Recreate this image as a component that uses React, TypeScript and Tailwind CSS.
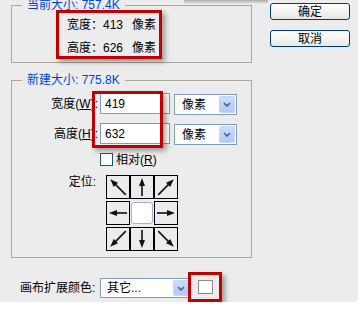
import React from 'react';

// small dark arrow used in the anchor grid; drawn pointing up, then rotated
function Arrow({ deg, long = false }: { deg: number; long?: boolean }) {
  const top = long ? 0 : 2;
  const tail = long ? 22 : 20;
  return (
    <svg viewBox="0 0 22 22" className="w-[22px] h-[22px]">
      <g transform={`rotate(${deg} 11 11)`}>
        <line x1="11" y1={tail} x2="11" y2={top + 6} stroke="#1a1a1a" strokeWidth="1.7" />
        <polygon points={`11,${top} 8,${top + 8} 14,${top + 8}`} fill="#111" />
      </g>
    </svg>
  );
}

function Cell({ children }: { children: React.ReactNode }) {
  return (
    <div className="w-[24px] h-[24px] border border-black bg-[#ececec] flex items-center justify-center">
      {children}
    </div>
  );
}

function DropButton() {
  return (
    <div className="w-[16px] h-full rounded-[2px] border border-[#c6d4f5] bg-linear-to-b from-[#cddbfd] to-[#b3c9f7] flex items-center justify-center">
      <svg viewBox="0 0 8 5" className="w-[8px] h-[5px]">
        <path d="M1 1 L4 4 L7 1" fill="none" stroke="#4d6185" strokeWidth="1.7" />
      </svg>
    </div>
  );
}

function RedBox({ className }: { className: string }) {
  return (
    <div
      className={`absolute border-[3px] border-[#c00000] shadow-[3px_3px_5px_rgba(0,0,0,0.35)] pointer-events-none ${className}`}
    />
  );
}

export default function App() {
  return (
    <div className="w-[362px] h-[312px] bg-white font-['Liberation_Sans','Noto_Sans_CJK_SC',sans-serif] text-[12px] leading-[12px] text-black">
      <div className="relative w-[358px] h-[302px] bg-[#ececec] overflow-hidden flex">
        {/* left column: the two group boxes and the canvas colour row */}
        <div className="ml-[11px] w-[241px] flex flex-col">
          <fieldset className="-mt-[1px] border border-[#aaa79a] pt-[3px] pb-[3px]">
            <legend className="ml-[10px] px-[5px] text-[#0046d5] leading-[12px]">当前大小: 757.4K</legend>
            <div className="pl-[55px] flex flex-col gap-[1px]">
              <div className="h-[22px] flex items-center">
                <span>宽度：</span>
                <span>413</span>
                <span className="ml-[9px]">像素</span>
              </div>
              <div className="h-[22px] flex items-center">
                <span>高度：</span>
                <span>626</span>
                <span className="ml-[9px]">像素</span>
              </div>
            </div>
          </fieldset>

          <fieldset className="mt-[11px] border border-[#aaa79a] pt-[7px] pb-[6px]">
            <legend className="ml-[10px] px-[5px] text-[#0046d5] leading-[12px]">新建大小: 775.8K</legend>

            <div className="flex items-start h-[21px]">
              <div className="w-[86px] h-[21px] flex items-center justify-end">
                宽度(<span className="underline">W</span>):
              </div>
              <div className="ml-[2px] w-[70px] h-[21px] border border-[#7f9db9] bg-white flex items-center pl-[4px]">419</div>
              <div className="ml-[4px] mt-[1px] w-[63px] h-[21px] border border-[#7f9db9] bg-white flex items-center justify-between pl-[7px] p-[1px]">
                <span>像素</span>
                <DropButton />
              </div>
            </div>

            <div className="mt-[9px] flex items-start h-[21px]">
              <div className="w-[86px] h-[21px] flex items-center justify-end">
                高度(<span className="underline">H</span>):
              </div>
              <div className="ml-[2px] w-[70px] h-[21px] border border-[#7f9db9] bg-white flex items-center pl-[4px]">632</div>
              <div className="ml-[4px] mt-[1px] w-[63px] h-[21px] border border-[#7f9db9] bg-white flex items-center justify-between pl-[7px] p-[1px]">
                <span>像素</span>
                <DropButton />
              </div>
            </div>

            <div className="mt-[9px] pl-[88px] flex items-center h-[13px]">
              <div className="w-[13px] h-[13px] border border-[#1c5180] bg-white" />
              <span className="ml-[3px]">
                相对(<span className="underline">R</span>)
              </span>
            </div>

            <div className="mt-[9px] flex items-start">
              <div className="w-[86px] pr-[2px] pt-[1px] text-right">定位:</div>
              <div className="ml-[8px] flex flex-col gap-[2px]">
                <div className="flex">
                  <Cell><Arrow deg={-45} long /></Cell>
                  <Cell><Arrow deg={0} /></Cell>
                  <Cell><Arrow deg={45} long /></Cell>
                </div>
                <div className="flex">
                  <Cell><Arrow deg={-90} /></Cell>
                  <div className="w-[24px] h-[24px] p-[1px]">
                    <div className="w-full h-full rounded-[3px] border border-[#9db3cf] bg-white" />
                  </div>
                  <Cell><Arrow deg={90} /></Cell>
                </div>
                <div className="flex">
                  <Cell><Arrow deg={-135} long /></Cell>
                  <Cell><Arrow deg={180} /></Cell>
                  <Cell><Arrow deg={135} long /></Cell>
                </div>
              </div>
            </div>
          </fieldset>

          <div className="mt-[20px] flex items-start">
            <div className="ml-[9px] w-[80px] h-[20px] flex items-center">画布扩展颜色:</div>
            <div className="w-[91px] h-[20px] border border-[#7f9db9] bg-white flex items-center justify-between pl-[6px] p-[1px]">
              <span>其它...</span>
              <DropButton />
            </div>
            <div className="ml-[7px] mt-[2px] w-[15px] h-[14px] border border-[#8c8c8c] bg-white" />
          </div>
        </div>

        {/* right column: dialog buttons */}
        <div className="ml-[18px] pt-[3px] w-[80px] flex flex-col gap-[10px]">
          <button className="w-[80px] h-[17px] rounded-[3px] border border-[#003c74] bg-linear-to-b from-white to-[#e8e7e2] flex items-center justify-center">
            确定
          </button>
          <button className="w-[80px] h-[17px] rounded-[3px] border border-[#003c74] bg-linear-to-b from-white to-[#e8e7e2] flex items-center justify-center">
            取消
          </button>
        </div>

        {/* annotation overlays */}
        <div className="absolute left-[184px] top-0 w-[84px] h-[4px] bg-linear-to-b from-[rgba(0,0,0,0.28)] to-transparent" />
        <RedBox className="left-[56px] top-[10px] w-[106px] h-[49px]" />
        <RedBox className="left-[92px] top-[91px] w-[71px] h-[57px]" />
        <RedBox className="left-[188px] top-[272px] w-[34px] h-[30px]" />
      </div>
    </div>
  );
}
